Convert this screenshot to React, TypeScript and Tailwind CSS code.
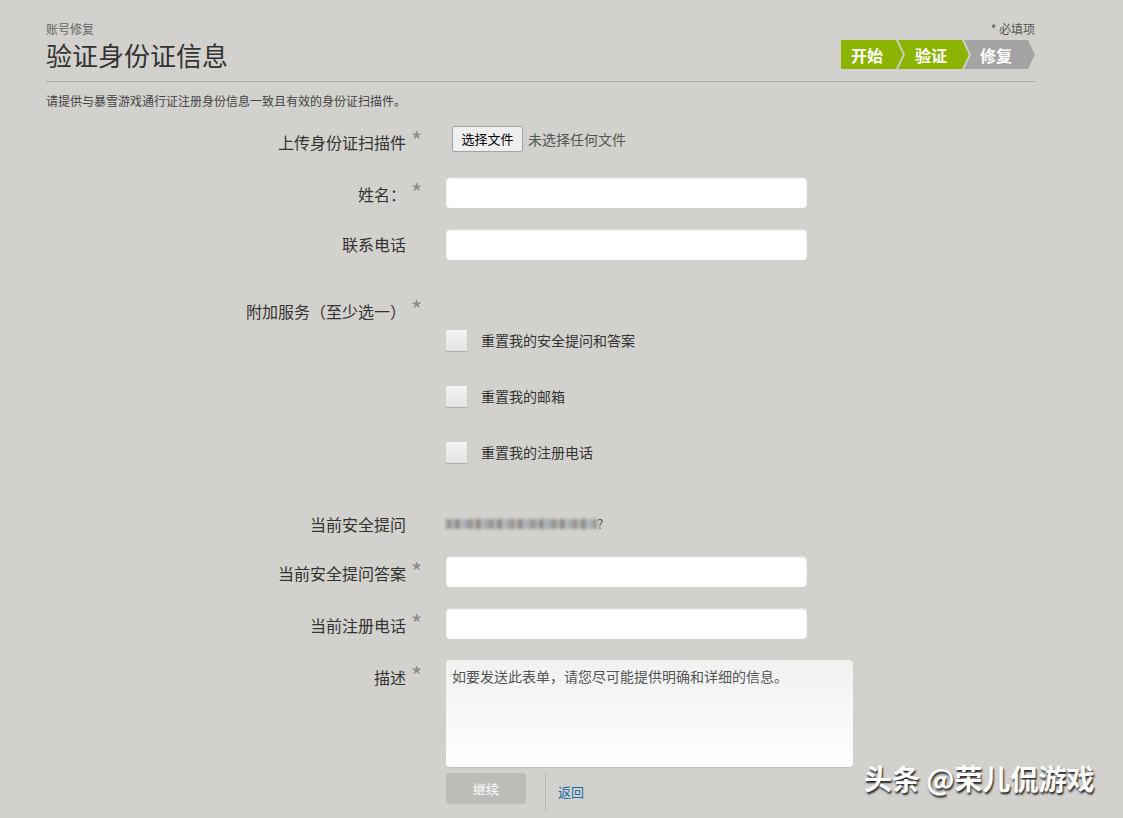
import React from 'react';

const font = { fontFamily: '"Noto Sans CJK SC", "Noto Sans", sans-serif' };

function Star() {
    return <span className="text-[24px] leading-[20px] text-[#8a8a8a] relative top-[-2px]">*</span>;
}

function Row({ label, required, children, height = 'h-[52px]', labelPad = 'pt-[7px]' }: {
    label: string;
    required?: boolean;
    children?: React.ReactNode;
    height?: string;
    labelPad?: string;
}) {
    return (
        <div className={`flex ${height}`}>
            <div className={`w-[360px] text-right text-[16px] leading-[20px] text-[#333] ${labelPad}`}>{label}</div>
            <div className={`w-[40px] pl-[5px] ${labelPad}`}>{required && <Star />}</div>
            <div className="flex-1">{children}</div>
        </div>
    );
}

function TextInput() {
    return (
        <input
            type="text"
            className="w-[361px] h-[31px] rounded-[4px] bg-white px-2 text-[14px] outline-none shadow-[inset_0_1px_2px_rgba(0,0,0,0.18)]"
        />
    );
}

function Check({ label }: { label: string }) {
    return (
        <div className="flex h-[56px] items-start">
            <span className="w-[21px] h-[21px] bg-gradient-to-b from-[#f4f4f4] to-[#e4e4e4] shadow-[0_1px_1px_rgba(0,0,0,0.15)]" />
            <span className="ml-[14px] text-[14px] leading-[21px] text-[#333]">{label}</span>
        </div>
    );
}

function Steps() {
    return (
        <div className="relative w-[194px] h-[29px]">
            <svg className="absolute inset-0" width="194" height="29" viewBox="0 0 194 29">
                <polygon points="0,0 55,0 62,14.5 55,29 0,29" fill="#8bb401" />
                <polygon points="57,0 121,0 128,14.5 121,29 57,29 64,14.5" fill="#8bb401" />
                <polygon points="123,0 187,0 194,14.5 187,29 123,29 130,14.5" fill="#a4a4a4" />
            </svg>
            <div className="relative flex h-full items-center text-white font-bold text-[16px] leading-[20px]">
                <span className="ml-[10px]">开始</span>
                <span className="ml-[32px]">验证</span>
                <span className="ml-[33px]">修复</span>
            </div>
        </div>
    );
}

export default function App() {
    return (
        <div className="relative min-h-[818px] w-full bg-[#d3d1cd] overflow-hidden" style={font}>
            <div className="ml-[46px] w-[989px] pt-[21px]">
                <div className="flex justify-between border-b border-[#a9a7a3] h-[61px]">
                    <div>
                        <div className="text-[12px] leading-[16px] text-[#666]">账号修复</div>
                        <h1 className="mt-[2px] text-[26px] leading-[32px] text-[#333]">验证身份证信息</h1>
                    </div>
                    <div className="flex flex-col items-end">
                        <div className="text-[12px] leading-[16px] text-[#555]">* 必填项</div>
                        <div className="mt-[3px]"><Steps /></div>
                    </div>
                </div>
                <p className="mt-[11px] text-[12px] leading-[16px] text-[#444]">
                    请提供与暴雪游戏通行证注册身份信息一致且有效的身份证扫描件。
                </p>

                <div className="mt-[16px]">
                    <Row label="上传身份证扫描件" required>
                        <div className="flex items-center mt-[1px] ml-[6px]">
                            <button className="h-[26px] w-[71px] bg-[#efefef] border border-[#a3a3a3] rounded-[2px] text-[13px] text-black">
                                选择文件
                            </button>
                            <span className="ml-[5px] text-[14px] text-[#555]">未选择任何文件</span>
                        </div>
                    </Row>
                    <Row label="姓名：" required>
                        <TextInput />
                    </Row>
                    <Row label="联系电话" labelPad="pt-[5px]">
                        <TextInput />
                    </Row>
                    <Row label="附加服务（至少选一）" required height="h-[49px]" labelPad="pt-[20px]" />
                    <div className="ml-[400px]">
                        <Check label="重置我的安全提问和答案" />
                        <Check label="重置我的邮箱" />
                        <Check label="重置我的注册电话" />
                    </div>
                    <Row label="当前安全提问" height="h-[58px]" labelPad="pt-[16px]">
                        <div className="flex items-center pt-[16px] h-[36px]">
                            <span className="w-[151px] h-[10px] blur-[1.5px] bg-[repeating-linear-gradient(90deg,#9a9896_0px,#9a9896_6px,#b9b7b4_6px,#b9b7b4_9px,#8e8c8a_9px,#8e8c8a_14px,#c4c2bf_14px,#c4c2bf_16px,#a8b0b8_16px,#a8b0b8_21px)]" />
                            <span className="text-[13px] text-[#555]">?</span>
                        </div>
                    </Row>
                    <Row label="当前安全提问答案" required>
                        <TextInput />
                    </Row>
                    <Row label="当前注册电话" required>
                        <TextInput />
                    </Row>
                    <Row label="描述" required height="h-[113px]">
                        <textarea
                            className="w-[407px] h-[107px] resize-none rounded-[4px] bg-gradient-to-b from-[#f1f1f1] to-white px-[6px] pt-[6px] text-[14px] leading-[20px] text-[#444] placeholder:text-[#555] outline-none shadow-[0_1px_1px_rgba(0,0,0,0.08)]"
                            placeholder="如要发送此表单，请您尽可能提供明确和详细的信息。"
                        />
                    </Row>
                    <div className="ml-[400px] flex items-start">
                        <button className="w-[80px] h-[31px] rounded-[3px] bg-[#bebcb8] text-white text-[13px]">继续</button>
                        <div className="ml-[19px] h-[37px] border-l border-[#b6b4b0]" />
                        <a className="ml-[12px] mt-[10px] text-[13px] leading-[17px] text-[#1d6ea6]">返回</a>
                    </div>
                </div>
            </div>
            <div className="absolute left-[864px] top-[759px] font-bold text-[28px] leading-[38px] text-white [text-shadow:1px_2px_2px_rgba(0,0,0,0.85)]">
                头条 @荣儿侃游戏
            </div>
        </div>
    );
}
